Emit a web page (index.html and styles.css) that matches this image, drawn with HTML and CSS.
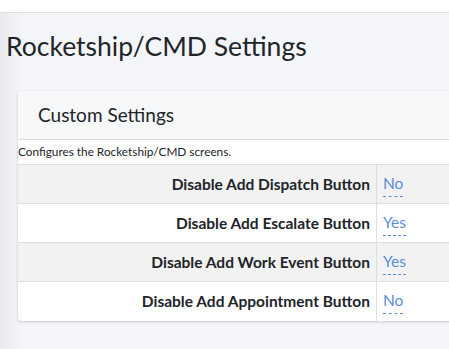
FILE: index.html
```html
<!DOCTYPE html>
<html lang="en">
<head>
    <meta charset="UTF-8">
    <title>Rocketship/CMD Settings</title>
    <link rel="stylesheet" href="styles.css">
</head>
<body>
    <div class="topbar"></div>
    <div class="content">
        <h1 class="page-title">Rocketship/CMD Settings</h1>
        <div class="card">
            <div class="card-header">Custom Settings</div>
            <p class="card-desc">Configures the Rocketship/CMD screens.</p>
            <table class="settings-table">
                <tr>
                    <th>Disable Add Dispatch Button</th>
                    <td><a class="editable" href="#">No</a></td>
                </tr>
                <tr>
                    <th>Disable Add Escalate Button</th>
                    <td><a class="editable" href="#">Yes</a></td>
                </tr>
                <tr>
                    <th>Disable Add Work Event Button</th>
                    <td><a class="editable" href="#">Yes</a></td>
                </tr>
                <tr>
                    <th>Disable Add Appointment Button</th>
                    <td><a class="editable" href="#">No</a></td>
                </tr>
            </table>
        </div>
    </div>
</body>
</html>
```

FILE: styles.css
```css
body {
    margin: 0;
    font-family: 'Lato', 'Open Sans', sans-serif;
    color: #212529;
    background: #f4f5f8;
    width: 449px;
    height: 349px;
    overflow: hidden;
}

.topbar {
    height: 12px;
    background: #fff;
    border-bottom: 1px solid #dcdee2;
}

.content {
    padding: 0 0 0 6px;
    background: linear-gradient(to right, #e9eaed 0, #f4f5f8 22px);
    height: 336px;
}

.page-title {
    margin: 0;
    padding-top: 16px;
    font-size: 26.5px;
    font-weight: 400;
    line-height: 34px;
    height: 62px;
}

.card {
    margin-left: 12px;
    background: #fff;
    border-radius: 4px 0 0 4px;
    box-shadow: 0 1px 3px rgba(0, 0, 0, 0.18);
    width: 440px;
}

.card-header {
    padding: 0 20px;
    height: 48px;
    line-height: 48px;
    font-size: 19px;
    background: #f7f8fa;
    border-bottom: 1px solid #dcdee2;
    border-radius: 4px 0 0 0;
}

.card-desc {
    margin: 0;
    font-size: 11.8px;
    line-height: 24px;
    height: 24px;
}

.settings-table {
    width: 100%;
    border-collapse: collapse;
}

.settings-table tr {
    height: 39px;
}

.settings-table tr:nth-child(odd) {
    background: #f2f2f2;
}

.settings-table th {
    width: 352px;
    text-align: right;
    font-size: 15.5px;
    font-weight: 700;
    padding: 0 6px 0 0;
    border-top: 1px solid #dcdee2;
    border-right: 1px solid #dcdee2;
}

.settings-table td {
    padding: 0 0 0 6px;
    border-top: 1px solid #dcdee2;
}

.editable {
    display: inline-block;
    color: #5b8fd5;
    font-size: 15.5px;
    line-height: 18px;
    padding-bottom: 4px;
    margin-top: 2px;
    text-decoration: none;
    border-bottom: 1px dashed #5b8fd5;
}
```
